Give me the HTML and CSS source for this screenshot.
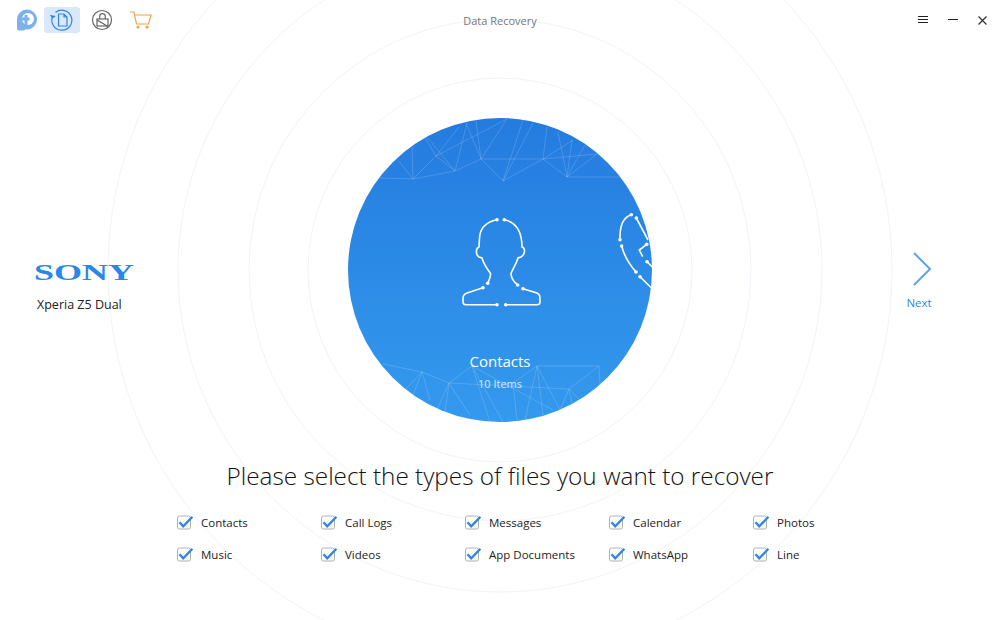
FILE: index.html
```html
<!DOCTYPE html>
<html lang="en">
<head>
    <meta charset="UTF-8">
    <title>Data Recovery</title>
    <link rel="stylesheet" href="styles.css">
</head>
<body>
    <div class="app">
        <svg class="rings" viewBox="0 0 1000 620">
            <circle cx="500" cy="270" r="192"/>
            <circle cx="500" cy="270" r="251"/>
            <circle cx="500" cy="270" r="322"/>
            <circle cx="500" cy="270" r="392"/>
        </svg>

        <svg class="defs" width="0" height="0">
            <symbol id="check" viewBox="0 0 17 17" overflow="visible">
                <rect x="1.5" y="2" width="13" height="13" rx="2" fill="#fff" stroke="#b0b0b0"/>
                <path d="M3.4 8.2 L7.3 12.4 L16.4 2.8" fill="none" stroke="#2b86e6" stroke-width="2.3"/>
            </symbol>
        </svg>

        <header class="topbar">
            <nav class="tools">
                <svg class="logo" width="22" height="22" viewBox="0 0 22 22">
                    <path d="M1 10.5 A10 10 0 1 1 11 20.5 L9.5 20.5 V20 A2.5 2 0 0 1 7 21.5 H3 A2 2 0 0 1 1 19.5 Z" fill="#7cb1ea"/>
                    <circle cx="12" cy="10" r="6" fill="#fff"/>
                    <path d="M10 6 V16 M5.5 10 H13.5" stroke="#7cb1ea" stroke-width="3"/>
                </svg>
                <a class="tool active">
                    <svg width="24" height="24" viewBox="0 0 24 24" fill="none" stroke="#2f86e6" stroke-width="1.2">
                        <path d="M5.5 4.5 A10 10 0 1 1 2.4 9"/>
                        <path d="M0.5 7 L2.5 9.8 L5.2 8" fill="#2f86e6"/>
                        <path d="M8.5 6 H14 L17 9 V18 H8.5 Z M14 6 V9 H17"/>
                    </svg>
                </a>
                <a class="tool">
                    <svg width="22" height="22" viewBox="0 0 22 22" fill="none" stroke="#666" stroke-width="1.2">
                        <circle cx="11" cy="11" r="9.5"/>
                        <rect x="6" y="10" width="11" height="7"/>
                        <path d="M8.7 10 V7.5 A2.8 2.8 0 0 1 14.3 7.5 V10 M6 11 L17 17.5"/>
                    </svg>
                </a>
                <a class="tool cart">
                    <svg width="22" height="18" viewBox="0 0 22 18" fill="none" stroke="#f3a04a" stroke-width="1.2">
                        <path d="M0 1 H4 L6.5 13 H18.5 L21 4 H5"/>
                        <circle cx="8" cy="16" r="1" fill="#f3a04a"/>
                        <circle cx="17" cy="16" r="1" fill="#f3a04a"/>
                    </svg>
                </a>
            </nav>
            <div class="title">Data Recovery</div>
            <div class="winbtns">
                <svg width="10" height="8" viewBox="0 0 10 8" stroke="#222"><path d="M0 .5 H10 M0 3.5 H10 M0 6.5 H10"/></svg>
                <svg width="10" height="8" viewBox="0 0 10 8" stroke="#222"><path d="M0 3.5 H10"/></svg>
                <svg width="9" height="9" viewBox="0 0 9 9" stroke="#333" stroke-width="1.2"><path d="M.5 .5 L8.5 8.5 M8.5 .5 L.5 8.5"/></svg>
            </div>
        </header>

        <main class="stage">
            <div class="device">
                <div class="brand">SONY</div>
                <div class="model">Xperia Z5 Dual</div>
            </div>

            <div class="disc">
                <svg class="disc-art" viewBox="348 118 304 304">
                    <g class="mesh">
                        <path d="M380 178 L413 179 L455 171 L481 159 L543 159 L597 154"/>
                        <path d="M413 179 L436 156 L455 171 M413 179 L412 147 M413 179 L398 160 M436 156 L425 138 M455 171 L427 137 M455 171 L467 123 M436 156 L507 119 M436 156 L459 127"/>
                        <path d="M481 159 L503 181 L543 159 M503 181 L523 120 M503 181 L533 123 M481 159 L507 119 M481 159 L466 123 M481 159 L476 121"/>
                        <path d="M543 159 L567 177 L620 177 M543 159 L547 127 M543 159 L573 140 M567 177 L558 132 M567 177 L572 140 M567 177 L585 145 M567 177 L597 154"/>
                        <path d="M383 364 L422 372 L449 383 L472 366 M449 383 L569 389 M422 372 L405 390 M422 372 L430 400 M422 372 L413 395"/>
                        <path d="M449 383 L470 415 M449 383 L437 410 M449 383 L445 412 M472 366 L553 410 M472 366 L490 422 M472 366 L503 422"/>
                        <path d="M537 366 L599 366 L569 389 L560 410 M537 366 L513 383 M537 366 L525 420 M537 366 L543 415 M537 366 L560 410 M569 389 L573 408 M569 389 L580 400 M599 366 L600 384 M513 383 L517 420"/>
                    </g>
                    <g class="icon">
                        <path d="M497 219.7 C486 222 480 228 479.5 238 L479 247 C475.5 248 475.5 255 479 257 L482 258 C484 265 488 270 490.5 273.5 C491 277 489 280 487.7 283.3"/>
                        <path d="M504.3 219.7 C515 222 522 230 522 247 C525.5 248 525.5 254 521 257 L518 258 C516 265 512 270 511 273.5 C511 278 514 282 517.7 285"/>
                        <path d="M483 287.7 L467 293 C463 294.5 463 296 463 302 C463 304 464 304.7 466 304.7 L497 304.7"/>
                        <path d="M523 288.7 L537 293 C540 294.5 540 296 540 302 C540 304 539 304.7 537 304.7 L505.7 304.7"/>
                        <path d="M631.3 214.7 C624 217 619.5 225 620 239.7 M636.3 218 L648 240 M621.7 246 C624 256 630 265 636 272 M640 276.7 L651.7 288.3 M646.7 244.3 L639.3 250 L642.7 256.7 M647 261.7 L653 267.7"/>
                    </g>
                    <g class="dots">
                        <circle cx="497" cy="219.7" r="1.8"/><circle cx="504.3" cy="219.7" r="1.8"/>
                        <circle cx="487.7" cy="283.3" r="1.8"/><circle cx="517.7" cy="285" r="1.8"/>
                        <circle cx="483" cy="287.7" r="1.8"/><circle cx="523" cy="288.7" r="1.8"/>
                        <circle cx="497" cy="304.7" r="1.8"/><circle cx="505.7" cy="304.7" r="1.8"/>
                        <circle cx="631.3" cy="214.7" r="1.8"/><circle cx="636.3" cy="218" r="1.8"/>
                        <circle cx="620" cy="239.7" r="1.8"/><circle cx="621.7" cy="246" r="1.8"/>
                        <circle cx="636" cy="272" r="1.8"/><circle cx="640" cy="276.7" r="1.8"/>
                        <circle cx="646.7" cy="244.3" r="1.8"/><circle cx="647" cy="261.7" r="1.8"/>
                    </g>
                </svg>
                <div class="disc-name">Contacts</div>
                <div class="disc-count">10 Items</div>
            </div>

            <a class="next">
                <svg width="20" height="34" viewBox="0 0 20 34" fill="none" stroke="#5fa3ec" stroke-width="2"><path d="M2 1 L18 17 L2 33"/></svg>
                <span>Next</span>
            </a>
        </main>

        <h1 class="heading">Please select the types of files you want to recover</h1>

        <ul class="types">
            <li><svg><use href="#check"/></svg>Contacts</li>
            <li><svg><use href="#check"/></svg>Call Logs</li>
            <li><svg><use href="#check"/></svg>Messages</li>
            <li><svg><use href="#check"/></svg>Calendar</li>
            <li><svg><use href="#check"/></svg>Photos</li>
            <li><svg><use href="#check"/></svg>Music</li>
            <li><svg><use href="#check"/></svg>Videos</li>
            <li><svg><use href="#check"/></svg>App Documents</li>
            <li><svg><use href="#check"/></svg>WhatsApp</li>
            <li><svg><use href="#check"/></svg>Line</li>
        </ul>
    </div>
</body>
</html>
```
FILE: styles.css
```css
body{
    margin: 0;
    background-color: white;
    font-family: "Open Sans", sans-serif;
    color: #222;
}

.app{
    position: relative;
    width: 1000px;
    height: 620px;
    overflow: hidden;
}

.rings{
    position: absolute;
    left: 0;
    top: 0;
    width: 1000px;
    height: 620px;
    fill: none;
    stroke: #f0f4fa;
}

.defs{
    position: absolute;
}

.topbar{
    position: relative;
    display: grid;
    grid-template-columns: 1fr auto 1fr;
    align-items: center;
    height: 40px;
}

.tools{
    display: flex;
    align-items: center;
    padding-left: 16px;
}

.logo{
    margin-right: 6px;
}

.tool{
    display: flex;
    justify-content: center;
    align-items: center;
    width: 36px;
    height: 26px;
    margin-right: 4px;
    border-radius: 3px;
}

.tool.active{
    background-color: #d9e8fa;
}

.tool.cart{
    margin-left: -1px;
}

.title{
    font-size: 11px;
    color: #777;
}

.winbtns{
    display: flex;
    justify-content: flex-end;
    align-items: center;
    gap: 20px;
    padding-right: 13px;
}

.stage{
    position: relative;
    display: grid;
    grid-template-columns: 1fr 304px 1fr;
    align-items: center;
    margin-top: 78px;
}

.device{
    display: flex;
    flex-direction: column;
    align-items: flex-start;
    padding: 32px 0 0 34px;
}

.brand{
    font-family: "Liberation Serif", serif;
    font-weight: bold;
    font-size: 24px;
    line-height: 24px;
    color: #2a86e8;
    transform: scaleX(1.5);
    transform-origin: left center;
}

.model{
    margin: 12px 0 0 3px;
    font-size: 12.5px;
    color: #222;
}

.disc{
    position: relative;
    display: flex;
    flex-direction: column;
    justify-content: flex-end;
    align-items: center;
    width: 304px;
    height: 304px;
    border-radius: 50%;
    background: linear-gradient(#247bdf, #349aee);
    overflow: hidden;
    color: white;
}

.disc-art{
    position: absolute;
    left: 0;
    top: 0;
    width: 304px;
    height: 304px;
}

.mesh{
    fill: none;
    stroke: rgba(255, 255, 255, 0.16);
}

.icon{
    fill: none;
    stroke: white;
    stroke-width: 1.6;
}

.dots{
    fill: white;
}

.disc-name{
    position: relative;
    font-size: 15px;
    line-height: 20px;
}

.disc-count{
    position: relative;
    margin: 5px 0 30px;
    font-size: 11px;
    line-height: 16px;
    opacity: 0.8;
}

.next{
    display: flex;
    flex-direction: column;
    align-items: center;
    justify-self: end;
    width: 24px;
    margin-right: 69px;
    padding-top: 22px;
    font-size: 11.5px;
    color: #2f86e6;
}

.next svg{
    margin-left: 6px;
}

.next span{
    margin-top: 9px;
}

.heading{
    position: relative;
    margin: 36px 0 0;
    font-size: 24.3px;
    font-weight: 300;
    line-height: 36px;
    text-align: center;
    color: #111;
}

.types{
    position: relative;
    display: grid;
    grid-template-columns: repeat(5, 144px);
    grid-auto-rows: 32px;
    margin: 12px 0 0 176px;
    padding: 0;
    list-style: none;
    font-size: 11.5px;
}

.types li{
    display: flex;
    align-items: center;
}

.types svg{
    width: 17px;
    height: 17px;
    margin-right: 8px;
    overflow: visible;
}
```
